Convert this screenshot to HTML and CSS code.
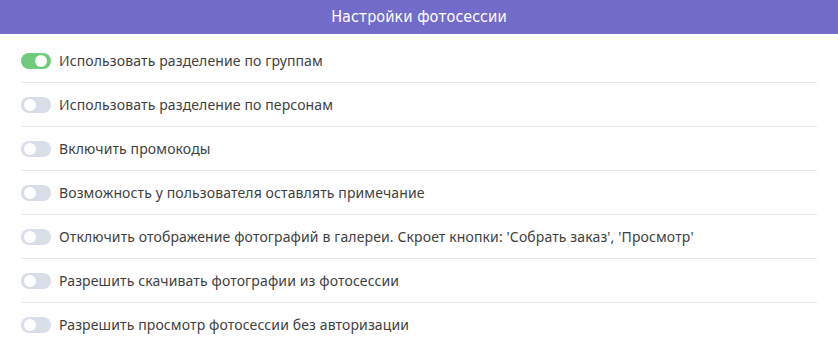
FILE: index.html
```html
<!DOCTYPE html>
<html>
<head>
  <title>Настройки фотосессии</title>
  <link rel="stylesheet" href="styles.css">
</head>
<body>
  <div class="panel">
    <div class="panel-head">Настройки фотосессии</div>
    <div class="settings">
      <label class="row">
        <span class="switch on"></span>
        <span class="text">Использовать разделение по группам</span>
      </label>
      <label class="row">
        <span class="switch"></span>
        <span class="text">Использовать разделение по персонам</span>
      </label>
      <label class="row">
        <span class="switch"></span>
        <span class="text">Включить промокоды</span>
      </label>
      <label class="row">
        <span class="switch"></span>
        <span class="text">Возможность у пользователя оставлять примечание</span>
      </label>
      <label class="row">
        <span class="switch"></span>
        <span class="text">Отключить отображение фотографий в галереи. Скроет кнопки: 'Собрать заказ', 'Просмотр'</span>
      </label>
      <label class="row">
        <span class="switch"></span>
        <span class="text">Разрешить скачивать фотографии из фотосессии</span>
      </label>
      <label class="row">
        <span class="switch"></span>
        <span class="text">Разрешить просмотр фотосессии без авторизации</span>
      </label>
    </div>
  </div>
</body>
</html>
```

FILE: styles.css
```css
body {
  margin: 0;
  background: #fff;
  font-family: "Noto Sans", "Open Sans", sans-serif;
}
.panel-head {
  height: 34px;
  line-height: 34px;
  background: #736bc9;
  color: #fff;
  text-align: center;
  font-family: "Liberation Sans Narrow", "DejaVu Sans Condensed", sans-serif;
  font-size: 16px;
}
.settings {
  padding: 5px 21px 0;
}
.row {
  display: flex;
  align-items: center;
  gap: 8px;
  height: 43px;
  border-bottom: 1px solid #e8e9f0;
  cursor: pointer;
}
.row:last-child {
  border-bottom: none;
}
.switch {
  position: relative;
  width: 30px;
  height: 16px;
  border-radius: 8px;
  background: #d8dde7;
  flex-shrink: 0;
}
.switch::after {
  content: "";
  position: absolute;
  top: 2px;
  left: 3px;
  width: 12px;
  height: 12px;
  border-radius: 50%;
  background: #fff;
}
.switch.on {
  background: #6fcb7c;
}
.switch.on::after {
  left: 14px;
}
.text {
  font-size: 14px;
  letter-spacing: 0.12px;
  color: #3f3f3f;
}
```
